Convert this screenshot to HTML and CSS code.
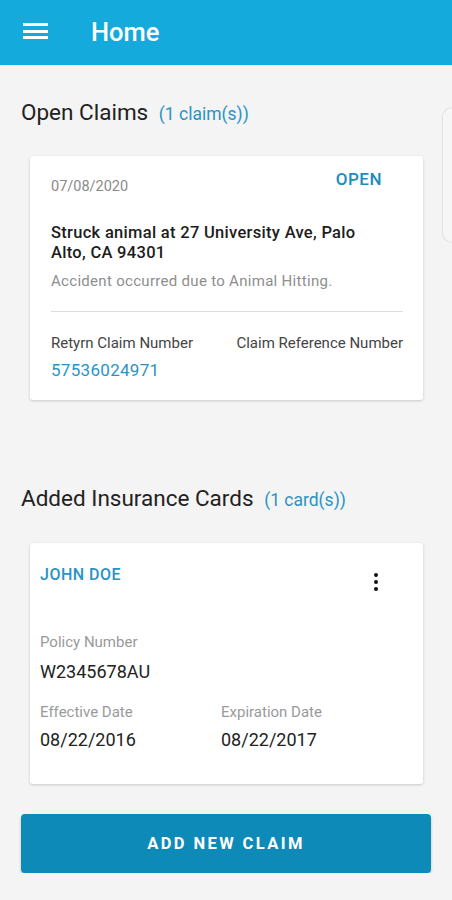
FILE: index.html
```html
<!DOCTYPE html>
<html lang="en">
  <head>
    <meta charset="UTF-8" />
    <meta name="viewport" content="width=device-width, initial-scale=1.0" />
    <title>Home</title>
    <link rel="stylesheet" href="styles.css">
  </head>
  <body>
    <header class="appbar">
      <button class="menu-btn" aria-label="Menu">
        <span></span><span></span><span></span>
      </button>
      <h1>Home</h1>
    </header>

    <main class="content">
      <section class="section claims">
        <h2 class="section-title">Open Claims <span class="count">(1 claim(s))</span></h2>
        <div class="peek-card"></div>
        <div class="card claim-card">
          <div class="claim-top">
            <span class="claim-date">07/08/2020</span>
            <span class="claim-status">OPEN</span>
          </div>
          <p class="claim-title">Struck animal at 27 University Ave, Palo Alto, CA 94301</p>
          <p class="claim-desc">Accident occurred due to Animal Hitting.</p>
          <hr class="divider" />
          <div class="claim-numbers">
            <div>
              <div class="num-label">Retyrn Claim Number</div>
              <div class="num-value">57536024971</div>
            </div>
            <div>
              <div class="num-label">Claim Reference Number</div>
            </div>
          </div>
        </div>
      </section>

      <section class="section cards">
        <h2 class="section-title">Added Insurance Cards <span class="count">(1 card(s))</span></h2>
        <div class="card ins-card">
          <div class="ins-top">
            <span class="ins-name">JOHN DOE</span>
            <span class="kebab"><i></i><i></i><i></i></span>
          </div>
          <div class="field">
            <div class="field-label">Policy Number</div>
            <div class="field-value">W2345678AU</div>
          </div>
          <div class="field-row">
            <div class="field">
              <div class="field-label">Effective Date</div>
              <div class="field-value">08/22/2016</div>
            </div>
            <div class="field">
              <div class="field-label">Expiration Date</div>
              <div class="field-value">08/22/2017</div>
            </div>
          </div>
        </div>
      </section>

      <button class="add-btn">ADD NEW CLAIM</button>
    </main>
  </body>
</html>
```

FILE: styles.css
```css
/* Base */
html,
body {
  overflow: hidden;
}
body {
  margin: 0;
  font-family: Roboto, "Noto Sans", sans-serif;
  background-color: #f4f4f4;
  color: #222;
}

/* App bar */
.appbar {
  height: 65px;
  background-color: #14aadc;
  display: flex;
  align-items: center;
  padding-left: 23px;
  box-sizing: border-box;
}
.menu-btn {
  width: 25px;
  height: 16px;
  padding: 0;
  border: none;
  background: none;
  display: flex;
  flex-direction: column;
  justify-content: space-between;
  margin-top: -3px;
}
.menu-btn span {
  display: block;
  height: 3px;
  background-color: #fff;
}
.appbar h1 {
  margin: -2px 0 0 43px;
  color: #fff;
  font-size: 25.5px;
  font-weight: 500;
}

/* Sections */
.content {
  padding: 0 21px;
}
.section {
  position: relative;
}
.section-title {
  margin: 0;
  font-size: 22.5px;
  font-weight: 400;
  color: #222;
  line-height: 27px;
}
.count {
  font-size: 17.5px;
  color: #2a93c4;
  margin-left: 5px;
}
.claims .section-title {
  padding-top: 34px;
}
.cards .section-title {
  padding-top: 85px;
}

/* Card peeking in from the right */
.peek-card {
  position: absolute;
  top: 42px;
  left: 421px;
  width: 10px;
  height: 134px;
  background-color: #f6f6f6;
  border: 1px solid #e2e2e2;
  border-right: none;
  border-radius: 10px 0 0 10px;
}

.card {
  background-color: #fff;
  margin: 0 8px 0 9px;
  border-radius: 3px;
  box-shadow: 0 1px 3px rgba(0, 0, 0, 0.18);
}

/* Open claim card */
.claim-card {
  margin-top: 28px;
  padding: 13px 20px 22px 21px;
  height: 244px;
  box-sizing: border-box;
}
.claim-top {
  display: flex;
  justify-content: space-between;
  align-items: flex-start;
}
.claim-date {
  font-size: 14.5px;
  color: #8a8a8a;
  margin-top: 9px;
}
.claim-status {
  font-size: 17px;
  font-weight: 500;
  color: #1a8cc0;
  margin-right: 21px;
  letter-spacing: 0.5px;
}
.claim-title {
  margin: 28px 0 0;
  max-width: 330px;
  font-size: 16.5px;
  font-weight: 500;
  line-height: 20px;
  letter-spacing: 0.3px;
  color: #1c1c1c;
}
.claim-desc {
  margin: 9px 0 0;
  font-size: 15px;
  letter-spacing: 0.3px;
  color: #8e8e8e;
}
.divider {
  border: none;
  border-top: 1px solid #dcdcdc;
  margin: 21px 0 0;
}
.claim-numbers {
  display: flex;
  justify-content: space-between;
  margin-top: 22px;
}
.num-label {
  font-size: 15px;
  color: #444;
}
.num-value {
  margin-top: 8px;
  font-size: 17px;
  color: #2a93c4;
  letter-spacing: 0.3px;
}

/* Insurance card */
.ins-card {
  margin-top: 29px;
  padding: 22px 10px 0;
  height: 241px;
  box-sizing: border-box;
}
.ins-top {
  display: flex;
  justify-content: space-between;
  align-items: flex-start;
}
.ins-name {
  font-size: 16px;
  font-weight: 500;
  color: #2a93c4;
  letter-spacing: 0.5px;
}
.kebab {
  display: flex;
  flex-direction: column;
  gap: 3px;
  margin: 8px 35px 0 0;
}
.kebab i {
  display: block;
  width: 4px;
  height: 4px;
  border-radius: 50%;
  background-color: #111;
}
.field {
  margin-top: 42px;
}
.field-label {
  font-size: 15px;
  color: #9a9a9a;
}
.field-value {
  margin-top: 10px;
  font-size: 18px;
  color: #222;
}
.field-row {
  display: flex;
}
.field-row .field {
  width: 181px;
  margin-top: 21px;
}
.field-row .field-value {
  margin-top: 8px;
}

/* Bottom button */
.add-btn {
  display: block;
  width: 100%;
  height: 59px;
  margin-top: 30px;
  border: none;
  border-radius: 4px;
  background-color: #0e8ab8;
  color: #fff;
  font-family: Roboto, sans-serif;
  font-size: 16.5px;
  font-weight: 700;
  letter-spacing: 2.4px;
  box-shadow: 0 2px 3px rgba(0, 0, 0, 0.2);
}
```
